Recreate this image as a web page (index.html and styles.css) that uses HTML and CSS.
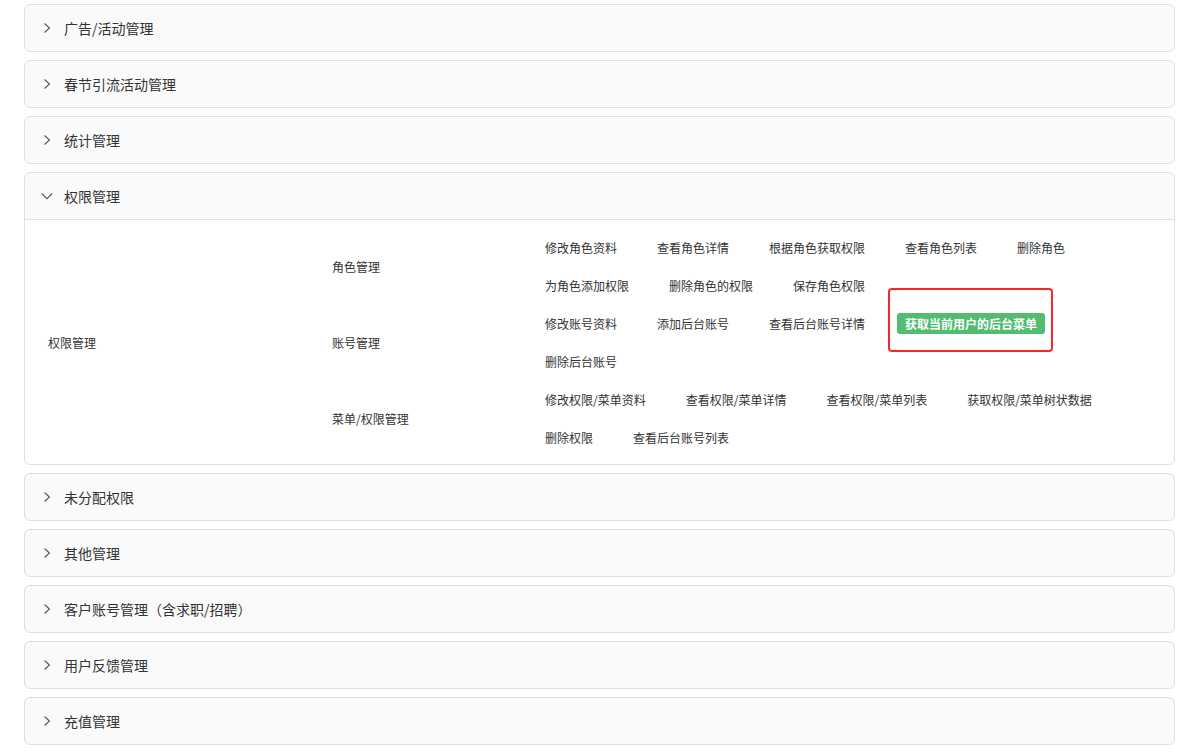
FILE: index.html
```html
<!DOCTYPE html>
<html lang="zh-CN">
<head>
<meta charset="utf-8">
<title>权限</title>
<link rel="stylesheet" href="styles.css">
</head>
<body>
<div class="page">
  <div class="panel"><div class="head"><svg class="chev" viewBox="0 0 12 12"><path d="M3.5 1.5 L8.5 6 L3.5 10.5"/></svg><span class="title">广告/活动管理</span></div></div>
  <div class="panel"><div class="head"><svg class="chev" viewBox="0 0 12 12"><path d="M3.5 1.5 L8.5 6 L3.5 10.5"/></svg><span class="title">春节引流活动管理</span></div></div>
  <div class="panel"><div class="head"><svg class="chev" viewBox="0 0 12 12"><path d="M3.5 1.5 L8.5 6 L3.5 10.5"/></svg><span class="title">统计管理</span></div></div>
  <div class="panel open">
    <div class="head"><svg class="chev" viewBox="0 0 12 12"><path d="M0.8 3.5 L6 8.7 L11.2 3.5"/></svg><span class="title">权限管理</span></div>
    <div class="body">
      <div class="c1">权限管理</div>
      <div class="c2 r1">角色管理</div>
      <div class="c3 r1">
        <span class="item">修改角色资料</span>
        <span class="item">查看角色详情</span>
        <span class="item">根据角色获取权限</span>
        <span class="item">查看角色列表</span>
        <span class="item">删除角色</span>
        <span class="item">为角色添加权限</span>
        <span class="item">删除角色的权限</span>
        <span class="item">保存角色权限</span>
      </div>
      <div class="c2 r2">账号管理</div>
      <div class="c3 r2">
        <span class="item">修改账号资料</span>
        <span class="item">添加后台账号</span>
        <span class="item">查看后台账号详情</span>
        <span class="item tag">获取当前用户的后台菜单</span>
        <span class="item">删除后台账号</span>
      </div>
      <div class="c2 r3">菜单/权限管理</div>
      <div class="c3 r3">
        <span class="item">修改权限/菜单资料</span>
        <span class="item">查看权限/菜单详情</span>
        <span class="item">查看权限/菜单列表</span>
        <span class="item">获取权限/菜单树状数据</span>
        <span class="item">删除权限</span>
        <span class="item">查看后台账号列表</span>
      </div>
    </div>
  </div>
  <div class="panel"><div class="head"><svg class="chev" viewBox="0 0 12 12"><path d="M3.5 1.5 L8.5 6 L3.5 10.5"/></svg><span class="title">未分配权限</span></div></div>
  <div class="panel"><div class="head"><svg class="chev" viewBox="0 0 12 12"><path d="M3.5 1.5 L8.5 6 L3.5 10.5"/></svg><span class="title">其他管理</span></div></div>
  <div class="panel"><div class="head"><svg class="chev" viewBox="0 0 12 12"><path d="M3.5 1.5 L8.5 6 L3.5 10.5"/></svg><span class="title">客户账号管理（含求职/招聘）</span></div></div>
  <div class="panel"><div class="head"><svg class="chev" viewBox="0 0 12 12"><path d="M3.5 1.5 L8.5 6 L3.5 10.5"/></svg><span class="title">用户反馈管理</span></div></div>
  <div class="panel"><div class="head"><svg class="chev" viewBox="0 0 12 12"><path d="M3.5 1.5 L8.5 6 L3.5 10.5"/></svg><span class="title">充值管理</span></div></div>
</div>
</body>
</html>
```
FILE: styles.css
```css
html, body {
  margin: 0;
  padding: 0;
  background: #ffffff;
}
body {
  font-family: "Noto Sans CJK SC", "Noto Sans", sans-serif;
  color: #333333;
}
.page {
  padding: 4px 19px 0 24px;
}
.panel {
  border: 1px solid #e0e0e0;
  border-radius: 6px;
  background: #fafafa;
  margin-bottom: 8px;
}
.head {
  height: 46px;
  display: flex;
  align-items: center;
  padding-left: 16px;
  font-size: 14px;
  color: #333333;
}
.title {
  padding-bottom: 1px;
}
.chev {
  width: 12px;
  height: 12px;
  margin-right: 11px;
  fill: none;
  stroke: #555555;
  stroke-width: 1.1;
}
.open .head {
  border-bottom: 1px solid #e0e0e0;
}
.body {
  background: #ffffff;
  border-radius: 0 0 6px 6px;
  padding: 8px 0 8px 23px;
  display: grid;
  grid-template-columns: 284px 205px 1fr;
  font-size: 12px;
}
.c1 {
  grid-column: 1;
  grid-row: 1 / span 3;
  display: flex;
  align-items: center;
}
.c2 {
  grid-column: 2;
  display: flex;
  align-items: center;
}
.c3 {
  grid-column: 3;
  display: flex;
  flex-wrap: wrap;
  align-items: center;
}
.r1 { grid-row: 1; }
.r2 { grid-row: 2; }
.r3 { grid-row: 3; }
.item {
  height: 38px;
  display: inline-flex;
  align-items: center;
  padding: 0 8px;
  margin-right: 24px;
  white-space: nowrap;
  color: #333333;
}
.item.tag {
  position: relative;
  height: 21px;
  background: #52bd70;
  color: #ffffff;
  border-radius: 3px;
  font-weight: 600;
}
.item.tag::after {
  content: "";
  position: absolute;
  left: -9px;
  right: -8px;
  top: -25px;
  bottom: -18px;
  border: 2px solid #f4292b;
  border-radius: 4px;
}
```
